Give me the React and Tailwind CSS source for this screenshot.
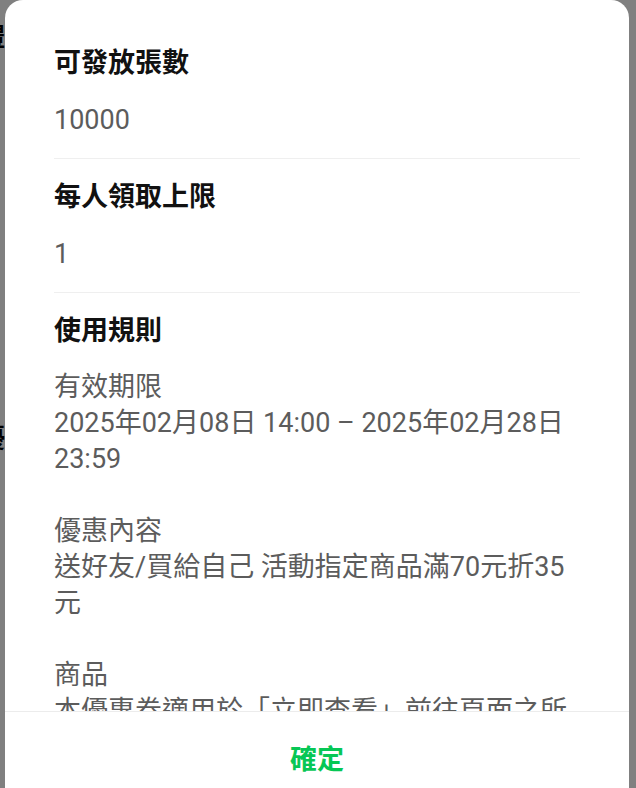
import React from "react";

const sections = [
  { title: "可發放張數", value: "10000" },
  { title: "每人領取上限", value: "1" },
];

const rules = `有效期限
2025年02月08日 14:00 – 2025年02月28日 23:59

優惠內容
送好友/買給自己 活動指定商品滿70元折35元

商品
本優惠券適用於「立即查看」前往頁面之所有指定商品，部分商品不適用。`;

function InfoSection({ title, value }) {
  return (
    <div className="py-[20px] border-b border-[#efefef]">
      <h2 className="text-[27px] leading-[36px] font-bold text-[#111]">{title}</h2>
      <p className="mt-[21px] text-[27px] leading-[36px] text-[#5c5c5c]">{value}</p>
    </div>
  );
}

export default function App() {
  return (
    <div className="relative w-[636px] h-[788px] overflow-hidden bg-[#808080] font-[Roboto,'Noto_Sans_CJK_TC',sans-serif]">
      {/* dimmed page behind the sheet */}
      <div className="flex flex-col text-[27px] leading-[28px] font-bold text-black">
        <span className="mt-[23px] -ml-[22px]">禮</span>
        <span className="mt-[374px] -ml-[22px]">優</span>
      </div>

      <div className="absolute left-[5px] top-0 bottom-0 w-[624px] bg-white rounded-t-[18px] flex flex-col">
        <div className="flex-1 overflow-hidden px-[49px] pt-[25px]">
          {sections.map((s) => (
            <InfoSection key={s.title} title={s.title} value={s.value} />
          ))}
          <div className="pt-[20px]">
            <h2 className="text-[27px] leading-[36px] font-bold text-[#111]">使用規則</h2>
            <p className="mt-[20px] text-[27px] leading-[36px] text-[#5c5c5c] whitespace-pre-line">{rules}</p>
          </div>
        </div>
        <div className="flex-none border-t border-[#ececec] pt-[30px] pb-[10px] text-center">
          <button className="text-[27px] leading-[36px] font-bold text-[#06c755]">確定</button>
        </div>
      </div>
    </div>
  );
}
